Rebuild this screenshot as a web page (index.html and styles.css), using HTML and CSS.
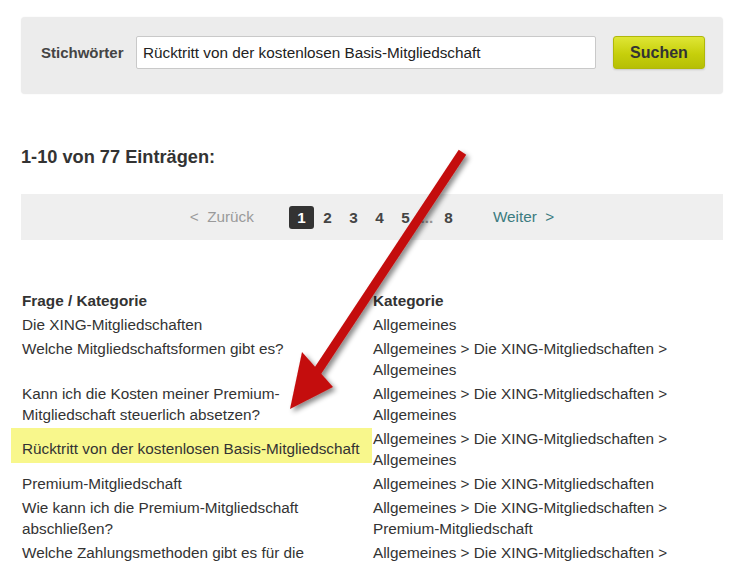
FILE: index.html
```html
<!DOCTYPE html>
<html lang="de">
<head>
<meta charset="utf-8">
<title>Hilfe – Suche</title>
<link rel="stylesheet" href="styles.css">
</head>
<body>
<div class="page">
  <form class="search">
    <label class="search-label">Stichwörter</label>
    <div class="search-input">Rücktritt von der kostenlosen Basis-Mitgliedschaft</div>
    <button type="button" class="search-btn">Suchen</button>
  </form>

  <h2 class="count">1-10 von 77 Einträgen:</h2>

  <div class="pager">
    <span class="prev">&lt;&nbsp;&nbsp;Zurück</span>
    <span class="pages">
      <span class="pg current">1</span>
      <span class="pg">2</span>
      <span class="pg">3</span>
      <span class="pg">4</span>
      <span class="pg">5</span>
      <span class="pg dots">...</span>
      <span class="pg">8</span>
    </span>
    <span class="next">Weiter&nbsp;&nbsp;&gt;</span>
  </div>

  <table class="results">
    <thead>
      <tr><th class="col-q">Frage / Kategorie</th><th class="col-c">Kategorie</th></tr>
    </thead>
    <tbody>
      <tr><td>Die XING-Mitgliedschaften</td><td>Allgemeines</td></tr>
      <tr><td>Welche Mitgliedschaftsformen gibt es?</td><td>Allgemeines &gt; Die XING-Mitgliedschaften &gt; Allgemeines</td></tr>
      <tr><td>Kann ich die Kosten meiner Premium-Mitgliedschaft steuerlich absetzen?</td><td>Allgemeines &gt; Die XING-Mitgliedschaften &gt; Allgemeines</td></tr>
      <tr class="hl-row"><td><div class="hl">Rücktritt von der kostenlosen Basis-Mitgliedschaft</div></td><td>Allgemeines &gt; Die XING-Mitgliedschaften &gt; Allgemeines</td></tr>
      <tr><td>Premium-Mitgliedschaft</td><td>Allgemeines &gt; Die XING-Mitgliedschaften</td></tr>
      <tr><td>Wie kann ich die Premium-Mitgliedschaft abschließen?</td><td>Allgemeines &gt; Die XING-Mitgliedschaften &gt; Premium-Mitgliedschaft</td></tr>
      <tr><td>Welche Zahlungsmethoden gibt es für die Premium-Mitgliedschaft?</td><td>Allgemeines &gt; Die XING-Mitgliedschaften &gt; Premium-Mitgliedschaft</td></tr>
    </tbody>
  </table>

  <svg class="arrow" width="750" height="566" viewBox="0 0 750 566" aria-hidden="true">
    <defs>
      <filter id="sh" x="-20%" y="-20%" width="140%" height="140%">
        <feDropShadow dx="3" dy="3" stdDeviation="2.5" flood-color="#000" flood-opacity="0.45"/>
      </filter>
    </defs>
    <g filter="url(#sh)">
      <line x1="460" y1="156" x2="315" y2="375" stroke="#c40d0d" stroke-width="9" stroke-linecap="square"/>
      <polygon points="290,409 302,352 333,387" fill="#c40d0d"/>
    </g>
  </svg>
</div>
</body>
</html>
```

FILE: styles.css
```css
html, body {
  margin: 0;
  padding: 0;
  background: #fff;
}

body {
  font-family: "Liberation Sans", Arial, sans-serif;
  color: #333;
  font-size: 15.3px;
}

.page {
  position: relative;
  width: 750px;
  height: 566px;
  overflow: hidden;
  padding: 17px 0 0 21px;
  box-sizing: border-box;
}

/* search panel */
.search {
  display: flex;
  align-items: center;
  width: 702px;
  box-sizing: border-box;
  padding: 19px 18px 25px 20px;
  background: #ececec;
  border-radius: 4px;
  box-shadow: 0 0 2px rgba(0,0,0,0.06);
  margin: 0;
}

.search-label {
  font-weight: bold;
  color: #444;
  font-size: 15px;
  width: 95px;
  flex: none;
}

.search-input {
  flex: none;
  width: 460px;
  height: 33px;
  box-sizing: border-box;
  border: 1px solid #c9c9c9;
  background: #fff;
  border-radius: 2px;
  padding: 0 6px;
  line-height: 31px;
  font-size: 15.3px;
  color: #222;
  white-space: nowrap;
  overflow: hidden;
}

.search-btn {
  margin-left: 17px;
  width: 92px;
  height: 33px;
  flex: none;
  border: 1px solid #b0b80a;
  border-radius: 3px;
  background: linear-gradient(#dfe635, #c6cf0b 55%, #b6bf05);
  box-shadow: 0 1px 2px rgba(0,0,0,0.15);
  font-family: "Liberation Sans", Arial, sans-serif;
  font-weight: bold;
  font-size: 16px;
  color: #333;
  padding: 0;
}

/* headline */
.count {
  margin: 53px 0 0 0;
  font-size: 18.2px;
  line-height: 20px;
  font-weight: bold;
  color: #333;
}

/* pager */
.pager {
  margin-top: 27px;
  width: 702px;
  height: 46px;
  background: #efefef;
  display: flex;
  align-items: center;
  justify-content: center;
  font-size: 15.3px;
}

.prev {
  color: #9a9a9a;
  margin-right: 35px;
}

.pages {
  display: flex;
  align-items: center;
}

.pg {
  width: 25px;
  height: 23px;
  margin-right: 1px;
  line-height: 23px;
  text-align: center;
  font-weight: bold;
  color: #444;
}

.pg.current {
  background: #333;
  color: #fff;
  border-radius: 3px;
}

.pg.dots {
  width: 16px;
  color: #999;
}

.next {
  color: #3b7b80;
  margin-left: 31px;
}

/* table */
.results {
  margin-top: 49px;
  margin-left: 1px;
  border-collapse: collapse;
  font-size: 15.3px;
  color: #333;
}

.results th,
.results td {
  text-align: left;
  vertical-align: top;
  padding: 1px 0 2px 0;
  line-height: 21px;
}

.results th {
  font-weight: bold;
  color: #333;
}

.col-q { width: 351px; }
.col-c { width: 305px; }

.results td:first-child { width: 351px; padding-right: 0; }

.hl {
  margin-left: -11px;
  padding: 10px 0 4px 11px;
  width: 350px;
  background: #f8f78c;
}

.arrow {
  position: absolute;
  left: 0;
  top: 0;
  pointer-events: none;
}
```
